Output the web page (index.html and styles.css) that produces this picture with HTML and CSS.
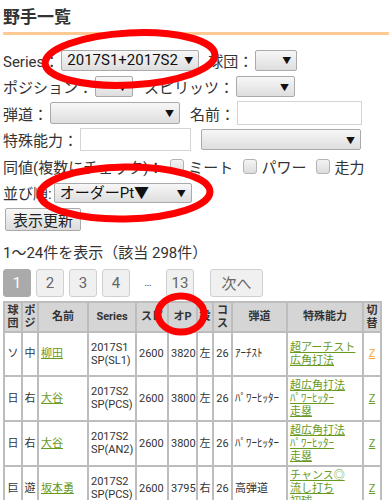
FILE: index.html
```html
<!DOCTYPE html>
<html lang="ja">
<head>
  <meta charset="UTF-8" />
  <meta name="viewport" content="width=device-width, initial-scale=1" />
  <title>野手一覧</title>
  <link rel="stylesheet" href="styles.css">
</head>
<body>
  <h1 class="page-title">野手一覧</h1>

  <!-- 検索フォーム -->
  <form class="search">
    <div class="row">
      <span>Series：</span>
      <span class="sel sel-series"><select><option>2017S1+2017S2</option></select></span>
      <span>球団：</span>
      <span class="sel sel-team"><select><option></option></select></span>
    </div>
    <div class="row">
      <span>ポジション：</span>
      <span class="sel sel-pos"><select><option></option></select></span>
      <span>スピリッツ：</span>
      <span class="sel sel-spirit"><select><option></option></select></span>
    </div>
    <div class="row">
      <span>弾道：</span>
      <span class="sel sel-traj"><select><option></option></select></span>
      <span>名前：</span>
      <input type="text" class="txt txt-name">
    </div>
    <div class="row">
      <span>特殊能力：</span>
      <input type="text" class="txt txt-skill">
      <span class="sel sel-skill"><select><option></option></select></span>
    </div>
    <div class="row">
      <span>同値(複数にチェック)：</span>
      <label class="opt"><input type="checkbox" class="chk">ミート</label>
      <label class="opt"><input type="checkbox" class="chk">パワー</label>
      <label class="opt"><input type="checkbox" class="chk">走力</label>
    </div>
    <div class="row">
      <span>並び順:</span>
      <span class="sel sel-sort"><select><option>オーダーPt▼</option></select></span>
    </div>
    <div class="row">
      <button type="button" class="btn">表示更新</button>
    </div>
  </form>

  <p class="count">1〜24件を表示（該当 298件）</p>

  <div class="pager">
    <span class="pg current">1</span>
    <a class="pg" href="#">2</a>
    <a class="pg" href="#">3</a>
    <a class="pg" href="#">4</a>
    <span class="dots">…</span>
    <a class="pg" href="#">13</a>
    <a class="pg next" href="#">次へ</a>
  </div>

  <!-- 一覧 -->
  <table class="players">
    <colgroup>
      <col class="c-team"><col class="c-pos"><col class="c-name"><col class="c-series">
      <col class="c-spd"><col class="c-op"><col class="c-throw"><col class="c-cost">
      <col class="c-traj"><col class="c-skill"><col class="c-sw">
    </colgroup>
    <thead>
      <tr>
        <th>球団</th><th>ポジ</th><th>名前</th><th>Series</th><th>スピ</th><th>オP</th>
        <th>投</th><th>コス</th><th>弾道</th><th>特殊能力</th><th>切替</th>
      </tr>
    </thead>
    <tbody>
      <tr>
        <td class="mid">ソ</td><td class="mid">中</td>
        <td><a href="#">柳田</a></td>
        <td>2017S1<br>SP(SL1)</td>
        <td>2600</td><td>3820</td>
        <td class="mid">左</td><td class="mid">26</td>
        <td>ｱｰﾁｽﾄ</td>
        <td class="skills"><a href="#">超アーチスト</a><br><a href="#">広角打法</a></td>
        <td class="mid"><a href="#" class="hot">Z</a></td>
      </tr>
      <tr>
        <td class="mid">日</td><td class="mid">右</td>
        <td><a href="#">大谷</a></td>
        <td>2017S2<br>SP(PCS)</td>
        <td>2600</td><td>3800</td>
        <td class="mid">左</td><td class="mid">26</td>
        <td>ﾊﾟﾜｰﾋｯﾀｰ</td>
        <td class="skills"><a href="#">超広角打法</a><br><a href="#">ﾊﾟﾜｰﾋｯﾀｰ</a><br><a href="#">走塁</a></td>
        <td class="mid"><a href="#">Z</a></td>
      </tr>
      <tr>
        <td class="mid">日</td><td class="mid">右</td>
        <td><a href="#">大谷</a></td>
        <td>2017S2<br>SP(AN2)</td>
        <td>2600</td><td>3800</td>
        <td class="mid">左</td><td class="mid">26</td>
        <td>ﾊﾟﾜｰﾋｯﾀｰ</td>
        <td class="skills"><a href="#">超広角打法</a><br><a href="#">ﾊﾟﾜｰﾋｯﾀｰ</a><br><a href="#">走塁</a></td>
        <td class="mid"><a href="#">Z</a></td>
      </tr>
      <tr>
        <td class="mid">巨</td><td class="mid">遊</td>
        <td><a href="#">坂本勇</a></td>
        <td>2017S2<br>SP(PCS)</td>
        <td>2600</td><td>3795</td>
        <td class="mid">右</td><td class="mid">26</td>
        <td>高弾道</td>
        <td class="skills"><a href="#">チャンス◎</a><br><a href="#">流し打ち</a><br><a href="#">初球</a></td>
        <td class="mid"><a href="#">Z</a></td>
      </tr>
    </tbody>
  </table>

  <!-- 赤丸の書き込み -->
  <svg class="marks" width="392" height="500" viewBox="0 0 392 500">
    <ellipse cx="130" cy="59" rx="85" ry="26" transform="rotate(-3 130 59)" />
    <ellipse cx="125" cy="193" rx="85" ry="26" transform="rotate(-1 125 193)" />
    <ellipse cx="181" cy="314" rx="23" ry="18" />
  </svg>
</body>
</html>
```

FILE: styles.css
```css
body {
  margin: 0;
  padding: 0 3px;
  font-family: Roboto, "Noto Sans CJK JP", sans-serif;
  font-size: 15px;
  color: #333;
  background: #fff;
}

.page-title {
  margin: 0 0 12px;
  padding-top: 2px;
  font-size: 17px;
  line-height: 30px;
  border-bottom: 3px solid #ffc994;
}

/* --- 検索フォーム --- */
.search { margin: 0; }
.row {
  display: flex;
  align-items: center;
  height: 26.5px;
  white-space: nowrap;
}

.sel {
  position: relative;
  display: inline-block;
  margin: 0 9px 0 2px;
}
.sel select {
  -webkit-appearance: none;
  appearance: none;
  display: block;
  width: 100%;
  height: 21px;
  margin: 0;
  padding: 0 16px 0 5px;
  border: 1px solid #aaa;
  border-radius: 2px;
  background: linear-gradient(#f7f7f7, #dedede);
  font: inherit;
  font-size: 15px;
  color: #111;
}
.sel::after {
  content: "▼";
  position: absolute;
  right: 6px; top: 50%;
  transform: translateY(-50%);
  font-size: 9px;
  color: #111;
  pointer-events: none;
}
.sel-series { width: 138px; margin-left: 2px; }
.sel-team { width: 42px; }
.sel-pos { width: 38px; margin-right: 11px; }
.sel-spirit { width: 59px; }
.sel-traj { width: 130px; margin-right: 10px; }
.sel-traj select { height: 22px; }
.sel-skill { width: 160px; }
.sel-sort { width: 138px; }
.sel-sort select { height: 20px; }

.txt {
  height: 24px;
  box-sizing: border-box;
  margin: 0 0 0 2px;
  border: 1px solid #d4d4d4;
  background: #fff;
  font: inherit;
}
.txt-name { width: 125px; }
.txt-skill { width: 111px; height: 23px; margin-right: 8px; }

.opt {
  display: flex;
  align-items: center;
  margin-left: 7px;
}
.opt + .opt { margin-left: 10px; }
.chk {
  -webkit-appearance: none;
  appearance: none;
  width: 14px; height: 15px;
  margin: 0 4px 0 0;
  border: 1px solid #b3b3b3;
  border-radius: 3px;
  background: linear-gradient(#f4f4f4, #dcdcdc);
}

.btn {
  margin-left: 2px;
  height: 23px;
  padding: 0 7px;
  border: 1px solid #aaa;
  border-radius: 2px;
  background: linear-gradient(#f7f7f7, #dcdcdc);
  font: inherit;
  color: #222;
}

.count {
  margin: 10px 0 0;
  line-height: 20px;
}

/* --- ページャ --- */
.pager {
  display: flex;
  align-items: center;
  gap: 5px;
  margin-top: 6px;
  height: 28px;
}
.pg {
  box-sizing: border-box;
  width: 28px; height: 28px;
  display: flex;
  align-items: center; justify-content: center;
  border: 1px solid #d0d0d0;
  border-radius: 3px;
  background: #f0f0f0;
  color: #666;
  text-decoration: none;
}
.pg.current {
  background: #aaa;
  border-color: #aaa;
  color: #fff;
}
.pg.next { width: 53px; margin-left: 11px; }
.dots {
  width: 26px;
  text-align: center;
  font-size: 11px;
  color: #555;
}

/* --- 一覧テーブル --- */
.players {
  margin-top: 4px;
  width: 377px;
  border-collapse: collapse;
  table-layout: fixed;
  font-size: 11px;
  line-height: 13px;
}
.players th, .players td {
  border: 2px solid #bdbdbd;
  padding: 2px 1px 2px 2px;
  overflow: hidden;
  white-space: nowrap;
}
.players th {
  height: 24px;
  padding: 1px;
  background: #d5d5d5;
  font-weight: bold;
  white-space: normal;
  word-break: break-all;
}
.players td { height: 38px; }
.players td.mid { text-align: center; padding: 2px 0; }
.players a { color: #679a1f; }
.players a.hot { color: #f5a531; }

.c-team { width: 18px; }
.c-pos { width: 16px; }
.c-name { width: 50px; }
.c-series { width: 48px; }
.c-spd { width: 32px; }
.c-op { width: 29px; }
.c-throw { width: 16px; }
.c-cost { width: 19px; }
.c-traj { width: 55px; }
.c-skill { width: 76px; }
.c-sw { width: 18px; }

/* 赤丸 */
.marks {
  position: absolute;
  top: 0; left: 0;
  pointer-events: none;
  fill: none;
  stroke: #f00;
  stroke-width: 7;
}
```
